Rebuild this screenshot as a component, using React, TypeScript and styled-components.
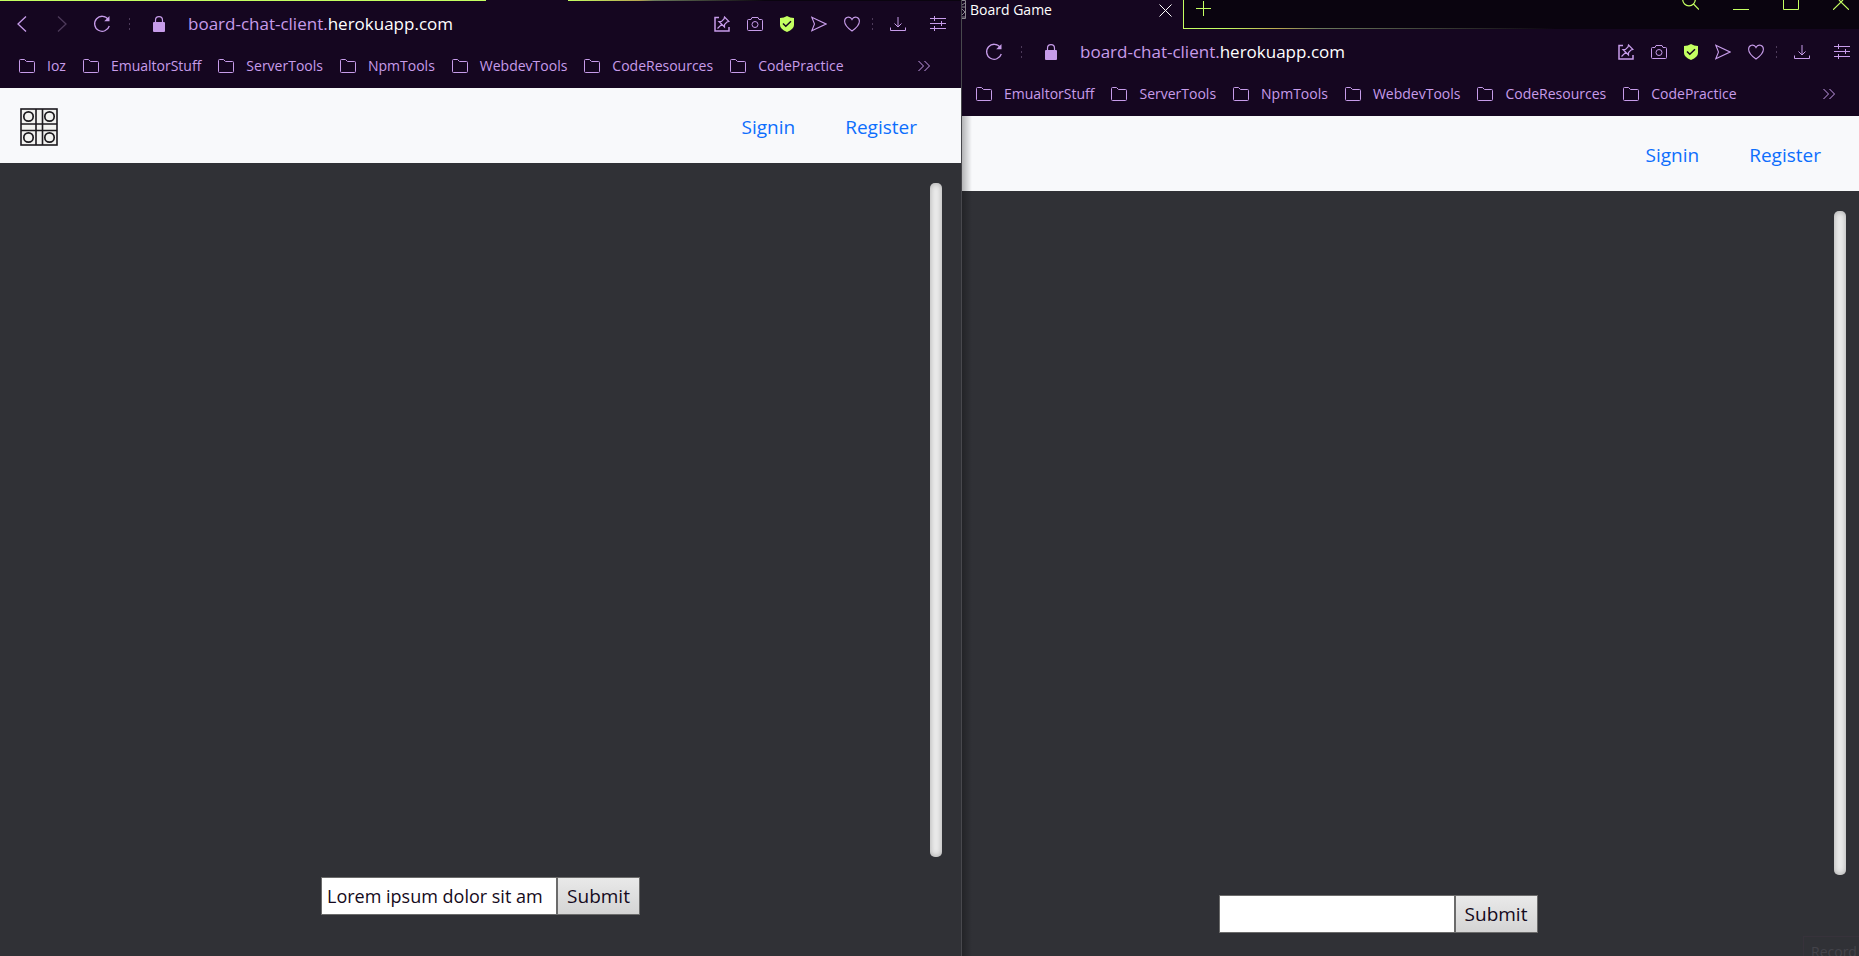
import React from "react";
import styled, { createGlobalStyle, css } from "styled-components";

const Global = createGlobalStyle`
  *, *::before, *::after { box-sizing: border-box; }
  html, body { margin: 0; }
  body {
    background: #303136;
    font-family: "Open Sans", "Noto Sans", sans-serif;
    overflow: hidden;
  }
  button, input { font-family: inherit; margin: 0; }
  button { cursor: pointer; }
  svg { display: block; flex: none; fill: none; stroke: currentColor; }
`;

const Desktop = styled.div`
  display: grid;
  grid-template-columns: minmax(0, 961fr) minmax(0, 898fr);
  height: 100vh;
  overflow: hidden;
`;

const Window = styled.section<{ $behind?: boolean }>`
  display: flex;
  flex-direction: column;
  position: relative;
  min-width: 0;
  background: #303136;
  ${(p) =>
    p.$behind &&
    css`
      border-left: 1px solid #48484d;
      &::before {
        content: "";
        position: absolute;
        inset: 116px auto 0 0;
        width: 10px;
        background: linear-gradient(to right, rgba(0, 0, 0, 0.28), transparent);
        pointer-events: none;
      }
    `}
`;

const Chrome = styled.div`
  background: #150620;
  color: #c79cea;
`;

const AccentLine = styled.div`
  height: 1px;
  display: grid;
  grid-template-columns: 486fr 82fr 393fr;
  & > :first-child { background: #c4ff61; }
  & > :last-child {
    background: linear-gradient(to right, #c4ff61 0, #b8a850 18%, #6c7a5c 22%, #33352f 38%, #0a040f 50%);
  }
`;

const TabStrip = styled.div`
  display: flex;
  height: 29px;
`;

const Tab = styled.div`
  display: flex;
  justify-content: space-between;
  width: 221px;
  height: 20px;
  padding-right: 11px;
  color: #fff;
  font-size: 14px;
  line-height: 20px;
`;

const TabTitle = styled.span`
  display: flex;
  gap: 4px;
`;

const StripRest = styled.div`
  display: flex;
  flex: 1;
  align-items: flex-start;
  justify-content: space-between;
  padding: 0 10px 0 12px;
  color: #c4ff61;
  background: #0a040f;
  border-left: 1px solid;
  border-bottom: 1px solid;
  border-image: linear-gradient(to right, #c4ff61 0, #c4ff61 6%, #b8a850 14%, #6c7a5c 20%, #33352f 40%, #0a040f 55%) 1;
`;

const WindowControls = styled.div`
  display: flex;
  gap: 34px;
`;

const IconButton = styled.button<{ $dim?: boolean; $apart?: boolean }>`
  display: block;
  margin-left: ${(p) => (p.$apart ? 7 : 0)}px;
  padding: 0;
  border: 0;
  background: none;
  color: ${(p) => (p.$dim ? "#4d3a5a" : "inherit")};
`;

const AddressBar = styled.div<{ $behind?: boolean }>`
  display: flex;
  align-items: center;
  justify-content: space-between;
  height: 46px;
  padding: ${(p) => (p.$behind ? "0 9px 0 23px" : "0 15px 0 13px")};
`;

const BarGroup = styled.div<{ $gap: number }>`
  display: flex;
  align-items: center;
  gap: ${(p) => p.$gap}px;
`;

const Dots = styled.span`
  width: 1px;
  height: 13px;
  margin-left: -5px;
  background: repeating-linear-gradient(#4d3a5a 0 2px, transparent 2px 5px);
`;

const Url = styled.span`
  font-size: 17px;
  line-height: 24px;
  white-space: nowrap;
  b { color: #fff; font-weight: 400; }
`;

const Bookmarks = styled.nav<{ $behind?: boolean }>`
  display: flex;
  align-items: center;
  justify-content: space-between;
  height: 41px;
  padding: ${(p) => (p.$behind ? "0 24px 4px 14px" : "0 31px 4px 19px")};
`;

const Bookmark = styled.a`
  display: flex;
  align-items: center;
  gap: 12px;
  color: inherit;
  font-size: 14px;
  line-height: 20px;
  text-decoration: none;
  white-space: nowrap;
`;

const SiteHeader = styled.header<{ $behind?: boolean }>`
  display: flex;
  align-items: center;
  justify-content: space-between;
  height: 75px;
  padding: ${(p) => (p.$behind ? "2px 38px 0 20px" : "2px 44px 0 20px")};
  background: #f8f9fb;
`;

const SiteLinks = styled.nav`
  display: flex;
  gap: 50px;
  margin-left: auto;
`;

const SiteLink = styled.a`
  color: #0d6efd;
  font-size: 19px;
  line-height: 28px;
  text-decoration: none;
`;

const Chat = styled.main<{ $behind?: boolean }>`
  display: flex;
  flex: 1;
  flex-direction: column;
  gap: 20px;
  min-height: 0;
  padding: ${(p) => (p.$behind ? "20px 13px 23px 0" : "20px 19px 41px 19px")};
`;

const Messages = styled.div`
  display: flex;
  flex: 1;
  justify-content: flex-end;
`;

const ScrollThumb = styled.div`
  width: 12px;
  border-radius: 5px;
  background: #ececec;
  box-shadow: inset 0 0 6px rgba(0, 0, 0, 0.3);
`;

const MessageForm = styled.form<{ $behind?: boolean }>`
  display: flex;
  justify-content: center;
  height: 38px;
  padding-right: ${(p) => (p.$behind ? 52 : 0)}px;
`;

const MessageInput = styled.input`
  width: 236px;
  padding: 0 5px;
  border: 1px solid #6b6b6b;
  border-radius: 0;
  outline: 0;
  background: #fff;
  color: #150a20;
  font-size: 18px;
`;

const SubmitButton = styled.button`
  width: 83px;
  padding: 0;
  border: 1px solid #6b6b6b;
  background: linear-gradient(#e9e9e9, #d4d4d4);
  color: #150a20;
  font-size: 19px;
`;

const RecordHint = styled.div`
  position: absolute;
  right: 0;
  bottom: 0;
  width: 56px;
  height: 20px;
  padding: 5px 0 0 7px;
  border: solid #37323b;
  border-width: 1px 0 0 1px;
  color: #43434a;
  font-size: 14px;
  line-height: 20px;
`;

const Back = ({ flip }: { flip?: boolean }) => (
  <svg width="17" height="16" viewBox="0 0 17 16" strokeWidth="1.3">
    <path d={flip ? "M5 .5 13 8l-8 7.500" : "M13 .5 5 8l8 7.500"} />
  </svg>
);
const Reload = () => (
  <svg width="18" height="18" viewBox="0 0 18 18" strokeWidth="1.300">
    <path d="M15.300 4.500A7.500 7.500 0 1 0 16.300 11" />
    <path d="M16.500 1v5.300h-5.300z" fill="currentColor" stroke="none" />
  </svg>
);
const Lock = () => (
  <svg width="12" height="16" viewBox="0 0 12 16">
    <path d="M2.500 7V4.200a3.500 3.500 0 0 1 7 0V7" strokeWidth="1.200" />
    <rect y="6" width="12" height="10" rx="1" fill="currentColor" stroke="none" />
  </svg>
);
const Folder = () => (
  <svg width="16" height="14" viewBox="0 0 16 14">
    <path d="M.5 1.500Q.5.500 1.500.500H5.500L7.500 2.500H14.500Q15.500 2.500 15.500 3.500V12.500Q15.500 13.500 14.500 13.500H1.500Q.5 13.500.5 12.500Z" />
  </svg>
);
const PinBoard = () => (
  <svg width="16" height="16" viewBox="0 0 16 16">
    <path d="M5 1.500H1V15h14v-4" strokeWidth="1.500" />
    <path d="m10.500 1 4.500 4.500-2 .5-2.500 2.500v2.500L5 5.500h2.500L10 3zM7.700 8.300 3.500 12.500" strokeWidth="1.200" />
  </svg>
);
const Camera = () => (
  <svg width="16" height="16" viewBox="0 0 16 16">
    <path d="M1.500 3.500H4l1-2h6l1 2h2.500q1 0 1 1v9q0 1-1 1h-13q-1 0-1-1v-9q0-1 1-1z" />
    <circle cx="8" cy="8.500" r="3" />
  </svg>
);
const Shield = () => (
  <svg width="14" height="16" viewBox="0 0 14 16">
    <path d="M7 0q3 2 7 2v7q0 4-7 7-7-3-7-7V2q4 0 7-2z" fill="#c4ff61" stroke="none" />
    <path d="m3 7.500 2.800 2.800L11 5.300" stroke="#150620" strokeWidth="1.500" />
  </svg>
);
const Send = () => (
  <svg width="16" height="16" viewBox="0 0 16 16" strokeWidth="1.100">
    <path d="M.8 1.300 15 8 .8 14.700 3.500 8z" />
  </svg>
);
const Heart = () => (
  <svg width="16" height="16" viewBox="0 0 16 16" strokeWidth="1.100">
    <path d="M8 15C3 11.500.6 8.500.6 5.200.6 1 6 -.6 8 3.500 10-.6 15.400 1 15.400 5.200 15.400 8.500 13 11.500 8 15z" />
  </svg>
);
const Download = () => (
  <svg width="16" height="16" viewBox="0 0 16 16">
    <path d="M8 1v10M4.500 7.500 8 11l3.500-3.500M.5 11.500v3h15v-3" />
  </svg>
);
const Sliders = () => (
  <svg width="16" height="16" viewBox="0 0 16 16">
    <path d="M0 2.500h16M0 7.500h16M0 12.500h16M4.500 0v5M11.500 5v5M4.500 10v5" />
  </svg>
);
const More = () => (
  <svg width="12" height="12" viewBox="0 0 12 12">
    <path d="m.5 1 5 5-5 5M6.500 1l5 5-5 5" />
  </svg>
);
const Logo = () => (
  <svg width="38" height="38" viewBox="0 0 38 38" color="#1c1a1e">
    <rect x="1" y="1" width="36" height="36" fill="#f3f3f1" strokeWidth="1.600" />
    <path d="M16 1v36M22.500 1v36M1 16h36M1 22.500h36" strokeWidth="1.600" />
    {[8.5, 29.5].map((x) =>
      [8.5, 29.5].map((y) => <circle key={`${x}-${y}`} cx={x} cy={y} r="4.700" strokeWidth="1.700" />)
    )}
  </svg>
);
const FaviconEdge = () => (
  <svg width="4" height="19" viewBox="0 0 4 19" color="#8a858e">
    <path d="M0 .5h3.500v18H0M0 5l3-2M0 7h3M0 9l3 3M0 15l3-3M0 17h3" />
  </svg>
);
const Close = () => (
  <svg width="13" height="13" viewBox="0 0 13 13">
    <path d="m.5.500 12 12M12.500.500l-12 12" />
  </svg>
);
const Plus = () => (
  <svg width="15" height="16" viewBox="0 0 15 16">
    <path d="M7.500 1v15M0 8.500h15" />
  </svg>
);
const Search = () => (
  <svg width="17" height="10" viewBox="0 0 17 10" strokeWidth="1.200">
    <circle cx="7" cy="-.5" r="6.300" />
    <path d="m11.500 4 5.500 5.500" />
  </svg>
);
const Minimize = () => (
  <svg width="16" height="10" viewBox="0 0 16 10">
    <path d="M0 9.500h16" />
  </svg>
);
const Maximize = () => (
  <svg width="16" height="10" viewBox="0 0 16 10">
    <path d="M.5 0v9.500h15V0" />
  </svg>
);
const CloseWindow = () => (
  <svg width="16" height="10" viewBox="0 0 16 10" strokeWidth="1.200">
    <path d="M0 9.800 8 2l8 7.800M6 0l2 2 2-2" />
  </svg>
);

const folders = ["EmualtorStuff", "ServerTools", "NpmTools", "WebdevTools", "CodeResources", "CodePractice"];

function BrowserWindow({ behind, message }: { behind?: boolean; message: string }) {
  const names = behind ? folders : ["Ioz", ...folders];
  return (
    <Window $behind={behind}>
      <Chrome>
        {behind ? (
          <TabStrip>
            <Tab>
              <TabTitle>
                <FaviconEdge />
                <span>Board Game</span>
              </TabTitle>
              <IconButton aria-label="Close tab"><Close /></IconButton>
            </Tab>
            <StripRest>
              <IconButton aria-label="New tab"><Plus /></IconButton>
              <WindowControls>
                <IconButton aria-label="Search tabs"><Search /></IconButton>
                <IconButton aria-label="Minimize"><Minimize /></IconButton>
                <IconButton aria-label="Maximize"><Maximize /></IconButton>
                <IconButton aria-label="Close window"><CloseWindow /></IconButton>
              </WindowControls>
            </StripRest>
          </TabStrip>
        ) : (
          <AccentLine>
            <span />
            <span />
            <span />
          </AccentLine>
        )}
        <AddressBar $behind={behind}>
          <BarGroup $gap={23}>
            {!behind && <IconButton aria-label="Back"><Back /></IconButton>}
            {!behind && <IconButton $dim aria-label="Forward"><Back flip /></IconButton>}
            <IconButton aria-label="Reload"><Reload /></IconButton>
            <Dots />
            <Lock />
            <Url>board-chat-client.<b>herokuapp.com</b></Url>
          </BarGroup>
          <BarGroup $gap={17}>
            <IconButton aria-label="Pinboards"><PinBoard /></IconButton>
            <IconButton aria-label="Snapshot"><Camera /></IconButton>
            <IconButton aria-label="Ad blocker"><Shield /></IconButton>
            <IconButton aria-label="Send"><Send /></IconButton>
            <IconButton aria-label="Favorite"><Heart /></IconButton>
            <Dots />
            <IconButton aria-label="Downloads"><Download /></IconButton>
            <IconButton $apart aria-label="Easy setup"><Sliders /></IconButton>
          </BarGroup>
        </AddressBar>
        <Bookmarks $behind={behind}>
          <BarGroup $gap={17}>
            {names.map((name) => (
              <Bookmark key={name} href="#"><Folder />{name}</Bookmark>
            ))}
          </BarGroup>
          <IconButton aria-label="More bookmarks"><More /></IconButton>
        </Bookmarks>
      </Chrome>
      <SiteHeader $behind={behind}>
        {!behind && <Logo />}
        <SiteLinks>
          <SiteLink href="#signin">Signin</SiteLink>
          <SiteLink href="#register">Register</SiteLink>
        </SiteLinks>
      </SiteHeader>
      <Chat $behind={behind}>
        <Messages><ScrollThumb /></Messages>
        <MessageForm $behind={behind} onSubmit={(e) => e.preventDefault()}>
          <MessageInput aria-label="Message" defaultValue={message} />
          <SubmitButton type="submit">Submit</SubmitButton>
        </MessageForm>
      </Chat>
      {behind && <RecordHint>Record</RecordHint>}
    </Window>
  );
}

export default function App() {
  return (
    <>
      <Global />
      <Desktop>
        <BrowserWindow message="Lorem ipsum dolor sit am" />
        <BrowserWindow behind message="" />
      </Desktop>
    </>
  );
}
